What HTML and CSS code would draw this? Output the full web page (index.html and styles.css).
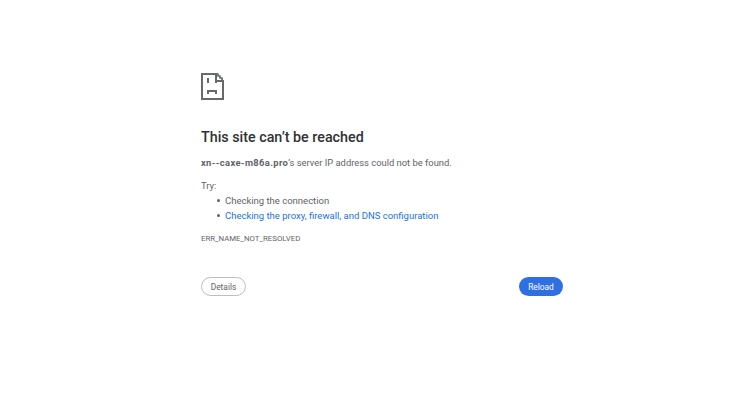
FILE: index.html
```html
<!DOCTYPE html>
<html>
<head>
	<title>This site can't be reached</title>
	<link rel="stylesheet" href="styles.css">
</head>
<body>
<div class="page">
	<svg class="icon" width="23" height="27" viewBox="0 0 23 27">
		<path d="M1 1H15V8H22V26H1Z" fill="none" stroke="#67696d" stroke-width="2"/>
		<path d="M15 1H17V3H19V5H21V7H22" fill="none" stroke="#67696d" stroke-width="1.6"/>
		<path d="M6 5H8V10H6ZM14 7H16V10H14Z" fill="#67696d"/>
		<path d="M7 21V18H15V21" fill="none" stroke="#67696d" stroke-width="2"/>
	</svg>
	<h1 class="title">This site can’t be reached</h1>
	<p class="msg"><b>xn--caxe-m86a.pro</b>’s server IP address could not be found.</p>
	<p class="try">Try:</p>
	<ul class="tips">
		<li>Checking the connection</li>
		<li><a href="#">Checking the proxy, firewall, and DNS configuration</a></li>
	</ul>
	<p class="code">ERR_NAME_NOT_RESOLVED</p>
	<div class="btns">
		<button class="btn details">Details</button>
		<button class="btn reload">Reload</button>
	</div>
</div>
</body>
</html>
```

FILE: styles.css
```css
body{
	margin: 0;
	background-color: #fff;
	font-family: Roboto, "Liberation Sans", sans-serif;
	color: #5f6368;
}
.page{
	width: 363px;
	margin-left: 201px;
	padding-top: 73px;
}
.icon{
	display: block;
}
.title{
	margin: 28px 0 0;
	font-size: 14.3px;
	line-height: 19px;
	font-weight: 500;
	color: #303134;
}
.msg{
	margin: 8px 0 0;
	font-size: 9.4px;
	line-height: 16px;
}
.msg b{
	letter-spacing: 0.35px;
}
.try{
	margin: 8px 0 0;
	font-size: 9.5px;
	line-height: 14px;
}
.tips{
	margin: 0;
	padding-left: 16px;
	list-style: none;
	font-size: 9.5px;
	line-height: 15px;
}
.tips li{
	display: flex;
	align-items: center;
	gap: 5px;
}
.tips li::before{
	content: "";
	width: 3px;
	height: 3px;
	border-radius: 50%;
	background-color: #5f6368;
}
.tips a{
	color: #1a73e8;
	text-decoration: none;
}
.code{
	margin: 10px 0 0;
	font-size: 7.8px;
	line-height: 12px;
}
.btns{
	display: flex;
	justify-content: space-between;
	margin-top: 32px;
}
.btn{
	height: 19px;
	border-radius: 10px;
	font-family: inherit;
	font-size: 8.4px;
	font-weight: 400;
	padding: 0;
}
.details{
	width: 45px;
	background-color: #fff;
	border: 1px solid #bdbdbd;
	color: #5f6368;
}
.reload{
	width: 44px;
	margin-right: 1px;
	background-color: #2f6fe4;
	border: none;
	color: #fff;
}
```
